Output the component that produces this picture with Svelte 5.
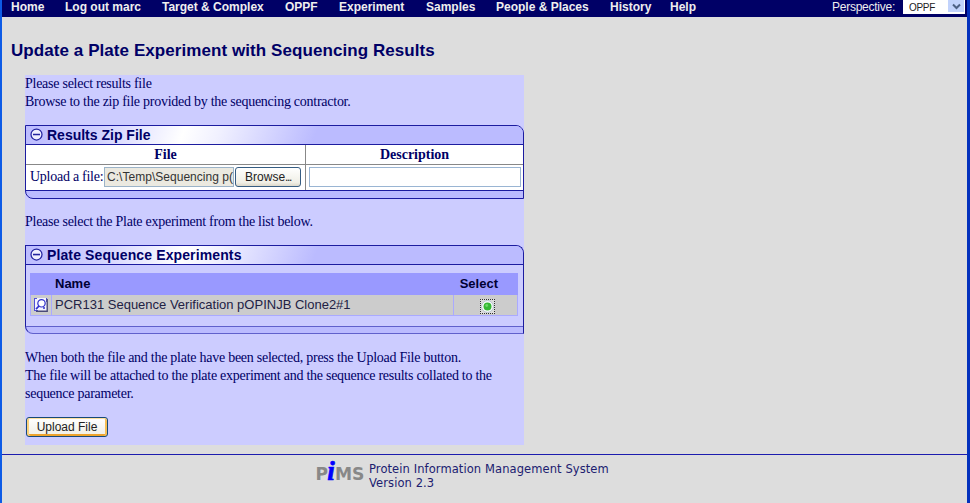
<script>
  const menu = [
    ['Home', 54], ['Log out marc', 97], ['Target & Complex', 123], ['OPPF', 54],
    ['Experiment', 87], ['Samples', 70], ['People & Places', 114], ['History', 60], ['Help', 30]
  ];
  let description = $state('');
</script>

{#snippet boxTitle(text)}
  <header class="box-title">
    <svg width="13" height="13" viewBox="0 0 13 13">
      <circle cx="6.5" cy="6.5" r="5.5" fill="#eeeeff" stroke="#2424a0" stroke-width="1.25" />
      <path d="M3 6.5H10" stroke="#2424a0" stroke-width="1.7" />
    </svg>
    <h2>{text}</h2>
  </header>
{/snippet}

<div class="window">
  <nav>
    {#each menu as [label, width]}
      <a href="#top" style:width="{width}px">{label}</a>
    {/each}
    <span class="perspective">Perspective:</span>
    <div class="select">
      <span>OPPF</span>
      <i><svg width="9" height="7" viewBox="0 0 9 7"><path d="M1 1.5L4.5 5L8 1.5" fill="none" stroke="#4d6185" stroke-width="2" /></svg></i>
    </div>
  </nav>

  <h1>Update a Plate Experiment with Sequencing Results</h1>

  <main>
    <p class="intro">Please select results file<br />Browse to the zip file provided by the sequencing contractor.</p>

    <section class="box zip">
      {@render boxTitle('Results Zip File')}
      <div class="grid">
        <div class="th">File</div>
        <div class="th">Description</div>
        <div class="td">
          <span class="upload-label">Upload a file:</span>
          <div class="path"><span>C:\Temp\Sequencing p(</span></div>
          <button class="browse">Browse<b>...</b></button>
        </div>
        <div class="td"><input type="text" bind:value={description} /></div>
      </div>
      <div class="box-foot"></div>
    </section>

    <p class="choose">Please select the Plate experiment from the list below.</p>

    <section class="box plates">
      {@render boxTitle('Plate Sequence Experiments')}
      <div class="list">
        <div class="list-head"><span>Name</span><span>Select</span></div>
        <div class="list-row">
          <div class="view">
            <svg width="14" height="14" viewBox="0 0 14 14">
              <rect x="0" y="0" width="13" height="13" fill="#f4f4ff" />
              <path d="M0.5 1V13M0 .5H3M12.5 0V4M0 12.5H4" stroke="#5050d8" fill="none" />
              <path d="M13.2 1V13.3H2" stroke="#4a4a78" stroke-width="1.4" fill="none" />
              <circle cx="7.5" cy="5.3" r="3.7" fill="#fff" stroke="#3030cc" stroke-width="1.2" />
              <path d="M5 8L2 11.2M9 10H11" stroke="#3030cc" stroke-width="1.7" />
            </svg>
          </div>
          <div class="name"><span>PCR131 Sequence Verification pOPINJB Clone2#1</span></div>
          <div class="pick">
            <svg width="15" height="15" viewBox="0 0 15 15">
              <rect x="0" y="0" width="15" height="15" fill="#dcdcdc" />
              <path d="M0 .5H15M14.5 0V15M15 14.5H0M.5 15V0" fill="none" stroke="#333" stroke-dasharray="1 1" />
              <circle cx="7.5" cy="7.5" r="5.8" fill="#fff" stroke="#9db4c4" stroke-width=".7" />
              <circle cx="7.5" cy="7.5" r="4" fill="#35b835" />
              <circle cx="6.7" cy="6.5" r="1.4" fill="#6cd868" />
            </svg>
          </div>
        </div>
      </div>
      <div class="box-foot"></div>
    </section>

    <p class="outro">When both the file and the plate have been selected, press the Upload File button.<br />The file will be attached to the plate experiment and the sequence results collated to the<br />sequence parameter.</p>
    <button class="upload">Upload File</button>
  </main>

  <footer>
    <svg class="logo" width="49" height="26" viewBox="0 0 49 26">
      <g font-family="Verdana, 'DejaVu Sans', sans-serif" font-weight="bold" fill="#888" font-size="17">
        <text x="-0.5" y="22" textLength="12.5" lengthAdjust="spacingAndGlyphs">P</text>
        <text x="19" y="22" textLength="29.5" lengthAdjust="spacingAndGlyphs">MS</text>
      </g>
      <text x="11.2" y="22" font-family="'Liberation Serif', serif" font-weight="bold" font-style="italic" font-size="27" fill="#0000ff" stroke="#0000ff" stroke-width=".7">i</text>
    </svg>
    <p>Protein Information Management System<br />Version 2.3</p>
  </footer>
</div>

<style>
  :global(body) { margin: 0; background: #ddd; }
  * { box-sizing: border-box; }
  .window {
    width: 970px; height: 503px; overflow: hidden; display: flex; flex-direction: column;
    background: #ddd; border-left: 2px solid #0d5be6; border-right: 3px solid #0431bd;
    font-family: 'Liberation Serif', 'Times New Roman', serif; color: #000066;
  }
  nav {
    height: 17px; flex: none; background: #000066; color: #eee; display: flex; padding-left: 9px;
    font: bold 12px/14px 'Liberation Sans', Arial, sans-serif;
  }
  nav a { color: inherit; text-decoration: none; white-space: nowrap; flex: none; }
  .perspective { margin-left: 132px; width: 71px; font-weight: normal; letter-spacing: -0.25px; }
  .select {
    width: 62px; height: 14px; background: #fff; color: #222; display: flex; justify-content: space-between;
    padding: 0 1px 1px 6px; font-size: 10px; font-weight: normal; line-height: 15px; letter-spacing: -0.3px;
  }
  .select i { width: 16px; height: 12px; background: #c2d3fc; display: flex; align-items: center; justify-content: center; }
  h1 { margin: 23px 0 0 9px; height: 35px; font: bold 17px/21px 'Liberation Sans', Arial, sans-serif; letter-spacing: 0.07px; white-space: nowrap; }
  main { margin-left: 23px; width: 499px; height: 370px; flex: none; background: #ccf; }
  p { margin: 0; font-size: 14px; line-height: 18px; letter-spacing: -0.26px; white-space: nowrap; }
  .intro { height: 50px; }
  .box { width: 499px; background: #bbf; border: 1px solid #1c1ca0; border-radius: 0 8px 0 8px; overflow: hidden; }
  .box-title {
    height: 19px; border-bottom: 1px solid #1c1ca0; display: flex; align-items: center; gap: 4px; padding: 0 0 1px 4px;
    background: linear-gradient(110deg, #bbf 0, #d0d0ff 70px, #fff 150px, #f0f0ff 185px, #bbf 275px);
  }
  h2 { margin: 0; font: bold 14px/16px 'Liberation Sans', Arial, sans-serif; white-space: nowrap; }
  .plates h2 { letter-spacing: 0.12px; }
  .grid { display: grid; grid-template-columns: 280px 217px; grid-template-rows: 20px 25px; background: #fff; }
  .th { border-bottom: 1px solid #888; text-align: center; font-size: 14px; line-height: 19px; font-weight: bold; }
  .grid > :nth-child(odd) { border-right: 1px solid #888; }
  .td { display: flex; align-items: center; padding: 0 0 1px 4px; font-size: 14px; }
  .upload-label { width: 74px; white-space: nowrap; flex: none; letter-spacing: -0.26px; }
  .path {
    width: 130px; height: 20px; border: 1px solid #9bb3c8; background: #ebe9e0; overflow: hidden; color: #333;
    font: 12px/19px 'Liberation Sans', Arial, sans-serif; white-space: nowrap; padding-left: 2px; flex: none;
  }
  .path span { letter-spacing: 0.03px; }
  button { font-family: 'Liberation Sans', Arial, sans-serif; font-size: 12px; color: #222; padding: 0; white-space: nowrap; }
  .browse { margin-left: 1px; width: 66px; height: 20px; flex: none; border: 1px solid #365d83; border-radius: 3px; background: linear-gradient(#fff, #f0efe6 80%, #dcd8ca); }
  .browse b { font-weight: normal; letter-spacing: -1.4px; }
  input { width: 212px; height: 20px; border: 1px solid #9ab5d3; background: #fff; padding: 0 2px; margin-left: -1px; }
  .box-foot { height: 8px; border-top: 1px solid #1c1ca0; }
  .zip { height: 74px; }
  .choose { padding-top: 14px; height: 46px; }
  .plates { height: 89px; border-bottom-color: #6060cc; }
  .list { background: #ccf; padding: 8px 5px 10px 4px; height: 61px; font-family: 'Liberation Sans', Arial, sans-serif; }
  .list-head { height: 22px; background: #99f; color: #000033; display: flex; justify-content: space-between; padding: 0 20px 0 25px; font-weight: bold; font-size: 13px; line-height: 22px; }
  .list-row { height: 21px; background: #ccc; border: 1px solid #aaf; border-top: 0; display: flex; }
  .view { width: 21px; border-right: 1px solid #aaf; display: flex; align-items: center; justify-content: center; }
  .name { flex: 1; border-right: 1px solid #aaf; padding-left: 3px; font-size: 13px; line-height: 19px; color: #222244; white-space: nowrap; }
  .pick { width: 63px; display: flex; align-items: center; justify-content: center; padding: 2px 0 0 4px; }
  .plates .box-foot { border-color: #6060cc; }
  .outro { padding-top: 15px; height: 83px; }
  .upload {
    display: block; width: 82px; height: 20px; margin-left: 1px; border: 1px solid #174979; border-radius: 3px;
    background: linear-gradient(#fff, #f0eee4); box-shadow: inset 0 1px #ffe0a0, inset 2px 0 #fbd27c, inset -2px 0 #f6be55, inset 0 -2px #eda32b;
  }
  footer { margin-top: 9px; height: 49px; border-top: 1px solid #1c1cae; display: flex; padding: 3px 0 0 314px; color: #202070; }
  .logo { width: 49px; flex: none; overflow: visible; }
  footer p { margin: 4px 0 0 4px; font: 11.5px/14px 'DejaVu Sans', Verdana, sans-serif; letter-spacing: 0.09px; }
</style>
